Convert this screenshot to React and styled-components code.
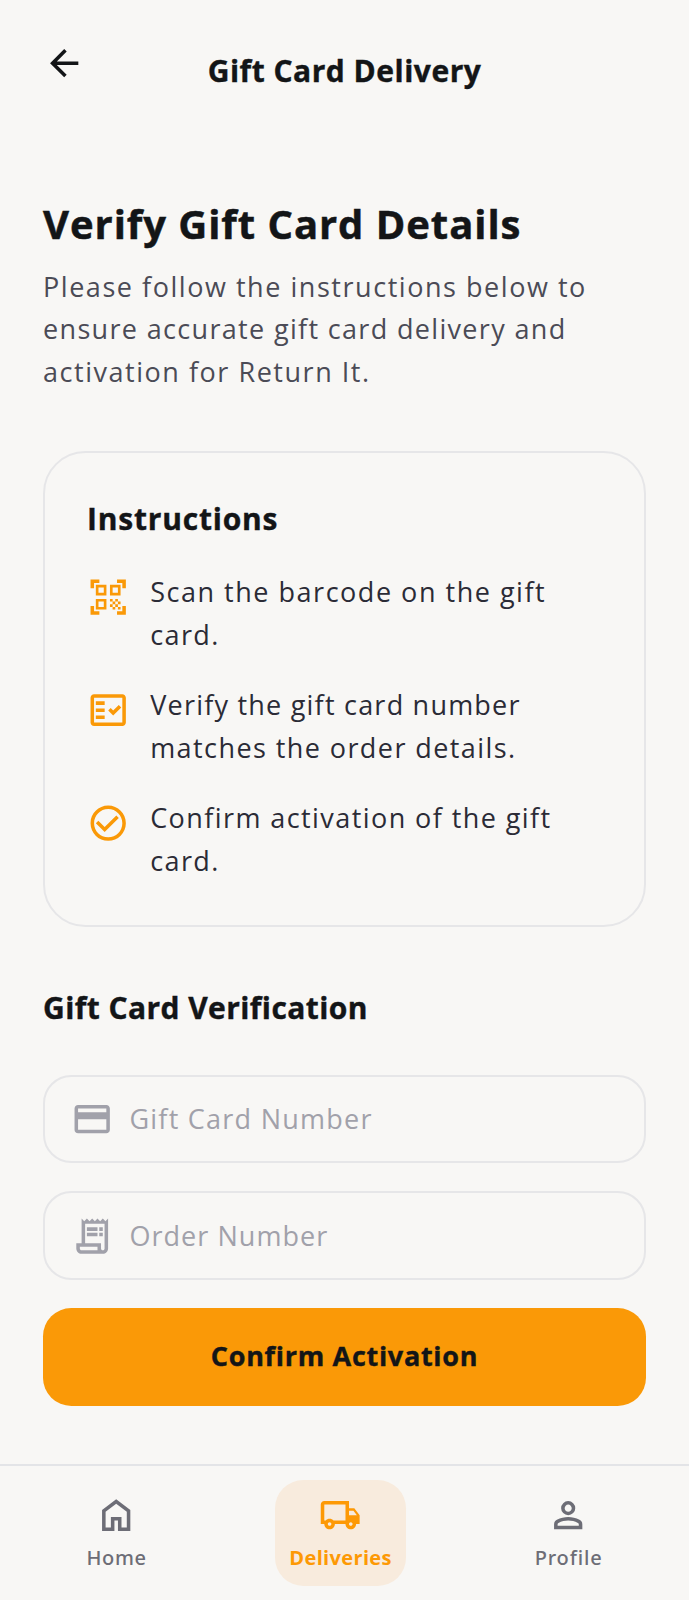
import React from 'react';
import styled, { createGlobalStyle, css } from 'styled-components';
import {
  MdArrowBack,
  MdQrCodeScanner,
  MdOutlineFactCheck,
  MdCheckCircleOutline,
  MdOutlineReceiptLong,
  MdCreditCard,
  MdOutlineLocalShipping,
} from 'react-icons/md';

const GlobalStyle = createGlobalStyle`
  *, *::before, *::after { box-sizing: border-box; }
  body {
    margin: 0;
    background: #f8f7f5;
    color: #131517;
    font-family: "Open Sans", "Noto Sans", sans-serif;
    font-size: 27px;
  }
  h1, h2, p, ul { margin: 0; padding: 0; }
`;

const Screen = styled.div`
  display: flex;
  flex-direction: column;
  width: 100%;
  max-width: 689px;
  height: 1600px;
  overflow: hidden;
`;

const Header = styled.header`
  display: grid;
  grid-template-columns: 42.4px 1fr 42.4px;
  align-items: start;
  height: 156px;
  padding: 42.2px 42.8px 0;
`;

const BackButton = styled.button`
  display: flex;
  padding: 0;
  border: 0;
  background: none;
  color: inherit;
`;

const headingText = css`
  font-weight: 700;
  font-size: 30px;
  line-height: 40px;
  white-space: nowrap;
  -webkit-text-stroke: 0.4px currentColor;
`;

const HeaderTitle = styled.h1`
  ${headingText}
  margin-top: 8.8px;
  text-align: center;
  letter-spacing: 0.5px;
`;

const Main = styled.main`
  flex: 1;
  display: flex;
  flex-direction: column;
  padding: 43px 43px 0;
`;

const PageTitle = styled.h2`
  font-weight: 700;
  font-size: 40px;
  line-height: 50px;
  letter-spacing: 0.95px;
  white-space: nowrap;
  -webkit-text-stroke: 0.5px currentColor;
`;

const Intro = styled.p`
  margin-top: 17px;
  line-height: 42.3px;
  color: #4b4b56;
`;

const Line = styled.span`
  display: block;
  white-space: nowrap;
  letter-spacing: ${({ $tracking }) => $tracking}px;
`;

const Card = styled.section`
  height: 476px;
  margin-top: 58px;
  padding: 46px 42px 0;
  border: 2px solid #e6e6e8;
  border-radius: 42.4px;
`;

const CardTitle = styled.h2`
  ${headingText}
  letter-spacing: 0.8px;
`;

const Steps = styled.ul`
  display: flex;
  flex-direction: column;
  gap: 28.2px;
  margin-top: 32.6px;
  list-style: none;
`;

const Step = styled.li`
  display: flex;
  gap: 20.8px;
  line-height: 42.4px;
  color: #2b2b36;
`;

const StepIcon = styled.span`
  display: flex;
  flex: none;
  height: 42.4px;
  margin-top: 4.9px;
  color: #fa9907;
`;

const SectionTitle = styled.h2`
  ${headingText}
  margin-top: 61px;
  letter-spacing: 0.42px;
`;

const Form = styled.form`
  display: flex;
  flex-direction: column;
  gap: 28.3px;
  margin-top: 47px;
`;

const Field = styled.label`
  display: flex;
  align-items: center;
  gap: 16px;
  height: 88.3px;
  padding: 1px 26px 0;
  border: 2px solid #e6e6e8;
  border-radius: 28.3px;
  color: #a1a1aa;
`;

const FieldInput = styled.input`
  flex: 1;
  min-width: 0;
  padding: 0 0 2px;
  border: 0;
  outline: 0;
  background: none;
  font: inherit;
  letter-spacing: ${({ $tracking }) => $tracking}px;
  &::placeholder { color: #a1a1aa; opacity: 1; }
`;

const SubmitButton = styled.button`
  height: 98.3px;
  padding: 0 0 3.4px;
  border: 0;
  border-radius: 28.3px;
  background: #fa9907;
  color: #131517;
  font: inherit;
  font-weight: 700;
  letter-spacing: 0.7px;
  -webkit-text-stroke: 0.4px currentColor;
`;

const NavBar = styled.nav`
  display: flex;
  justify-content: space-between;
  align-items: flex-start;
  height: 136px;
  padding: 14px 72.5px 0;
  border-top: 2px solid #e3e4e7;
`;

const NavItem = styled.a`
  display: flex;
  flex-direction: column;
  align-items: center;
  gap: 7.3px;
  height: 105.7px;
  padding: 14.1px 14px 0;
  border-radius: 28.3px;
  background: ${({ $active }) => ($active ? '#f8ebdd' : 'transparent')};
  color: ${({ $active }) => ($active ? '#fd9905' : '#6d6d76')};
  font-family: ${({ $active }) =>
    $active ? '"Open Sans", sans-serif' : '"Noto Sans", sans-serif'};
  font-weight: ${({ $active }) => ($active ? 700 : 500)};
  font-size: 20px;
  line-height: 28px;
`;

const Glyph = styled.svg`
  display: block;
  width: 42.4px;
  height: 42.4px;
  fill: currentColor;
`;

const HomeIcon = () => (
  <Glyph viewBox="0 0 24 24">
    <path d="M6 19h3v-6h6v6h3v-9l-6-4.5L6 10zM4 21V9l8-6 8 6v12h-7v-6h-2v6z" />
  </Glyph>
);

const PersonIcon = () => (
  <Glyph viewBox="0 -960 960 960">
    <path d="M480-480q-66 0-113-47t-47-113q0-66 47-113t113-47q66 0 113 47t47 113q0 66-47 113t-113 47ZM160-160v-112q0-34 17.5-62.5T224-378q62-31 126-46.5T480-440q66 0 130 15.5T736-378q29 15 46.5 43.5T800-272v112H160Zm80-80h480v-32q0-11-5.5-20T700-306q-54-27-109-40.5T480-360q-56 0-111 13.5T260-306q-9 5-14.5 14t-5.5 20v32Zm240-320q33 0 56.5-23.5T560-640q0-33-23.5-56.5T480-720q-33 0-56.5 23.5T400-640q0 33 23.5 56.5T480-560Z" />
  </Glyph>
);

const ICON = 42.4;

const intro = [
  ['Please follow the instructions below to', 1.54],
  ['ensure accurate gift card delivery and', 1.33],
  ['activation for Return It.', 1.53],
];

const steps = [
  { Icon: MdQrCodeScanner, lines: [['Scan the barcode on the gift', 1.52], ['card.', 1.4]] },
  { Icon: MdOutlineFactCheck, lines: [['Verify the gift card number', 1.22], ['matches the order details.', 1.42]] },
  { Icon: MdCheckCircleOutline, lines: [['Confirm activation of the gift', 1.42], ['card.', 1.4]] },
];

const fields = [
  { Icon: MdCreditCard, label: 'Gift Card Number', tracking: 1.25 },
  { Icon: MdOutlineReceiptLong, label: 'Order Number', tracking: 1.05 },
];

const tabs = [
  { Icon: HomeIcon, label: 'Home', tracking: 0.6 },
  { Icon: MdOutlineLocalShipping, label: 'Deliveries', tracking: 0.35, active: true },
  { Icon: PersonIcon, label: 'Profile', tracking: 0.85 },
];

const renderLines = (lines) =>
  lines.map(([text, tracking]) => (
    <Line key={text} $tracking={tracking}>{text} </Line>
  ));

export default function App() {
  return (
    <Screen>
      <GlobalStyle />
      <Header>
        <BackButton type="button" aria-label="Back">
          <MdArrowBack size={ICON} />
        </BackButton>
        <HeaderTitle>Gift Card Delivery</HeaderTitle>
      </Header>
      <Main>
        <PageTitle>Verify Gift Card Details</PageTitle>
        <Intro>{renderLines(intro)}</Intro>
        <Card>
          <CardTitle>Instructions</CardTitle>
          <Steps>
            {steps.map(({ Icon, lines }) => (
              <Step key={lines[0][0]}>
                <StepIcon><Icon size={ICON} /></StepIcon>
                <div>{renderLines(lines)}</div>
              </Step>
            ))}
          </Steps>
        </Card>
        <SectionTitle>Gift Card Verification</SectionTitle>
        <Form>
          {fields.map(({ Icon, label, tracking }) => (
            <Field key={label}>
              <Icon size={ICON} />
              <FieldInput placeholder={label} $tracking={tracking} />
            </Field>
          ))}
          <SubmitButton type="button">Confirm Activation</SubmitButton>
        </Form>
      </Main>
      <NavBar>
        {tabs.map(({ Icon, label, tracking, active }) => (
          <NavItem key={label} $active={active}>
            <Icon size={ICON} />
            <Line $tracking={tracking}>{label}</Line>
          </NavItem>
        ))}
      </NavBar>
    </Screen>
  );
}
